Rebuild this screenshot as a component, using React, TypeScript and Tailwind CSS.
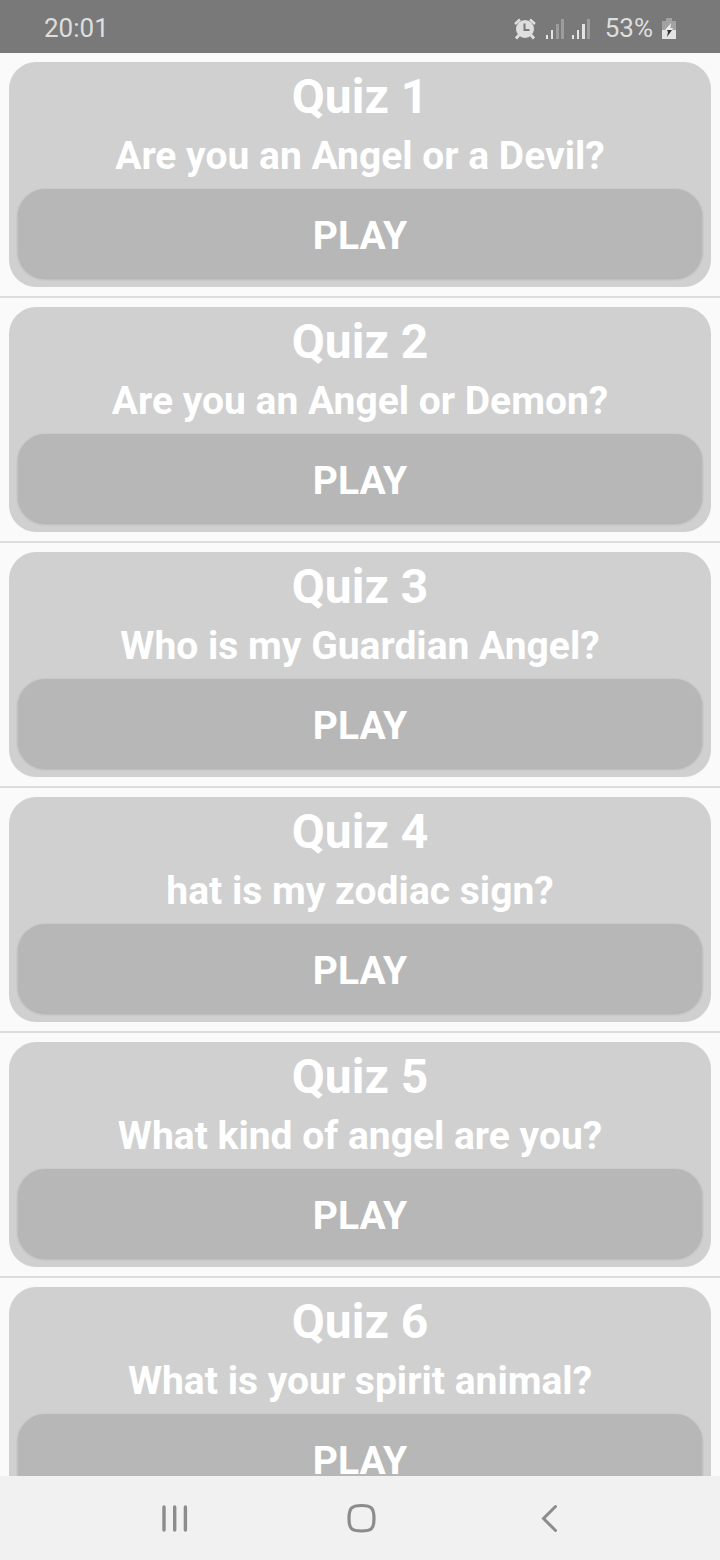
interface Quiz {
  id: number;
  question: string;
}

const quizzes: Quiz[] = [
  { id: 1, question: 'Are you an Angel or a Devil?' },
  { id: 2, question: 'Are you an Angel or Demon?' },
  { id: 3, question: 'Who is my Guardian Angel?' },
  { id: 4, question: 'hat is my zodiac sign?' },
  { id: 5, question: 'What kind of angel are you?' },
  { id: 6, question: 'What is your spirit animal?' },
];

export default function App() {
  return (
    <div className="flex flex-col h-screen bg-[#fafafa] font-['Roboto',sans-serif]">
      <StatusBar />
      <main className="flex-1 min-h-0 overflow-hidden">
        <ul>
          {quizzes.map((quiz) => (
            <QuizCard key={quiz.id} quiz={quiz} />
          ))}
        </ul>
      </main>
      <NavBar />
    </div>
  );
}

function QuizCard(props: { quiz: Quiz }) {
  const { quiz } = props;
  return (
    <li className="p-[9px] border-b-2 border-[#dcdcdc]">
      <div className="px-[9px] pb-[9px] bg-[#d0d0d0] rounded-[27px] text-center text-white font-bold">
        <h2 className="text-[48px] leading-[70px]">Quiz {quiz.id}</h2>
        <p className="text-[39px] leading-[48px]">{quiz.question}</p>
        <button
          type="button"
          className="block w-full h-[89px] mt-[9px] pt-1 bg-[#b7b7b7] rounded-[27px] shadow-[0_1px_3px_rgba(0,0,0,0.2)] text-[39px] leading-[48px] cursor-pointer"
        >
          PLAY
        </button>
      </div>
    </li>
  );
}

function StatusBar() {
  return (
    <header className="flex shrink-0 items-center justify-between h-[53px] pl-11 pr-[43px] pt-1 bg-[#797979] text-[#dedede] text-[26px]">
      <span>20:01</span>
      <div className="flex items-center">
        <AlarmIcon />
        <svg width="46" height="22" viewBox="0 0 46 22" className="ml-2 mr-[14px]">
          <g fill="#e4e4e4">
            <rect x="1" y="17" width="2" height="4" />
            <rect x="6" y="12" width="2" height="9" />
            <rect x="27" y="17" width="2" height="4" />
            <rect x="32" y="12" width="2" height="9" />
            <rect x="37" y="6" width="3" height="15" />
          </g>
          <g fill="#9c9c9c">
            <rect x="11" y="6" width="3" height="15" />
            <rect x="16" y="1" width="3" height="20" />
            <rect x="42" y="1" width="3" height="20" />
          </g>
        </svg>
        <span>53%</span>
        <svg width="16" height="22" viewBox="0 0 16 22" className="ml-2">
          <path d="M5 0h6v3h4v9H1V3h4z" fill="#a2a2a2" />
          <path d="M1 12h14v9H1z" fill="#e4e4e4" />
          <path d="M10 5 4 12h5z" fill="#eeeeee" />
          <path d="M8 10h4l-1 2H8z" fill="#eeeeee" />
          <path d="M6 12h5l-5 7 1-5z" fill="#333333" />
        </svg>
      </div>
    </header>
  );
}

function AlarmIcon() {
  return (
    <svg width="24" height="22" viewBox="0 0 24 22" fill="none">
      <circle cx="12" cy="11" r="9" fill="#dedede" />
      <path
        d="M2 6 7 1.500M22 6l-5-4.500"
        stroke="#dedede"
        strokeWidth="2.500"
      />
      <path d="M6 17l-3 3.500M18 17l3 3.500" stroke="#dedede" strokeWidth="3" />
      <path d="M11.500 5.500v6.500h5" stroke="#797979" strokeWidth="2" />
    </svg>
  );
}

function NavBar() {
  return (
    <nav className="grid shrink-0 grid-cols-3 h-[84px] pl-20 pr-[78px] bg-[#f1f1f1] text-[#8c8c8c]">
      <button
        type="button"
        aria-label="Recent apps"
        className="flex items-center justify-center"
      >
        <svg width="32" height="32" viewBox="0 0 32 32" fill="none">
          <path
            d="M6 5v23M16.700 5v23M27.400 5v23"
            stroke="currentColor"
            strokeWidth="3.400"
            strokeLinecap="round"
          />
        </svg>
      </button>
      <button
        type="button"
        aria-label="Home"
        className="flex items-center justify-center"
      >
        <svg width="32" height="32" viewBox="0 0 32 32" fill="none">
          <path
            d="M16.500 3.500c10 0 12.500 2.500 12.500 13s-2.500 12.500-12.500 12.500S4 27 4 16.500 6.500 3.500 16.500 3.500z"
            stroke="currentColor"
            strokeWidth="3.200"
          />
        </svg>
      </button>
      <button
        type="button"
        aria-label="Back"
        className="flex items-center justify-center"
      >
        <svg width="32" height="32" viewBox="0 0 32 32" fill="none">
          <path
            d="M23.500 4.500 11.500 16.500 23.500 28.500"
            stroke="currentColor"
            strokeWidth="3"
            strokeLinecap="round"
          />
        </svg>
      </button>
    </nav>
  );
}
